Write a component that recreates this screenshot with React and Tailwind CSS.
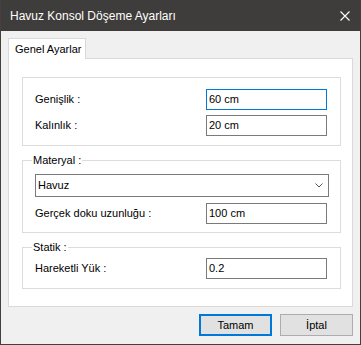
import React from "react";

function TextBox({ value, focused }) {
  return (
    <div
      className={
        "w-[121px] h-[21px] bg-white flex items-center pl-[2px] border " +
        (focused ? "border-[#0078d7]" : "border-[#7a7a7a]")
      }
    >
      <span className="text-[11px] text-black leading-none">{value}</span>
    </div>
  );
}

function Row({ label, value, focused }) {
  return (
    <div className="flex items-center pl-[12px] h-[21px]">
      <span className="w-[171px] text-[11px] text-black leading-none">{label}</span>
      <TextBox value={value} focused={focused} />
    </div>
  );
}

function Group({ title, className, children }) {
  return (
    <div className={"relative border border-[#dcdcdc] " + className}>
      {title && (
        <span className="absolute left-[9px] top-[-8px] bg-white px-[1px] text-[11px] leading-[14px] text-black">
          {title}
        </span>
      )}
      {children}
    </div>
  );
}

export default function App() {
  return (
    <div
      className="w-[361px] h-[345px] bg-[#f0f0f0] flex flex-col border-x border-b border-[#434140]"
      style={{ fontFamily: '"Liberation Sans", Arial, sans-serif' }}
    >
      <div className="h-[31px] bg-[#3f3d3b] flex items-center justify-between pl-[9px] pr-[9px] shrink-0">
        <span className="text-white text-[12px] leading-none">
          Havuz Konsol Döşeme Ayarları
        </span>
        <svg width="10" height="10" viewBox="0 0 10 10" className="mr-[1px]">
          <path d="M0.5 0.5 L9.5 9.5 M9.5 0.5 L0.5 9.5" stroke="#ffffff" strokeWidth="1.1" fill="none" />
        </svg>
      </div>

      <div className="px-[7px] pt-[7px] flex flex-col">
        <div className="relative z-10 w-[78px] h-[21px] bg-white border-x border-t border-[#d9d9d9] flex items-center pl-[6px] -mb-px">
          <span className="text-[11px] leading-none text-black">Genel Ayarlar</span>
        </div>
        <div className="w-[345px] h-[249px] bg-white border border-[#d9d9d9] pl-[13px] pt-[18px] flex flex-col">
          <Group className="w-[319px] h-[69px] pt-[11px] flex flex-col gap-[5px]">
            <Row label="Genişlik :" value="60 cm" focused />
            <Row label="Kalınlık :" value="20 cm" />
          </Group>

          <Group title="Materyal :" className="w-[319px] h-[73px] mt-[14px] pt-[13px] flex flex-col gap-[6px]">
            <div className="ml-[12px] w-[294px] h-[23px] border border-[#7a7a7a] bg-white flex items-center justify-between pl-[2px] pr-[5px]">
              <span className="text-[11px] leading-none text-black">Havuz</span>
              <svg width="8" height="5" viewBox="0 0 8 5">
                <path d="M0.5 0.5 L4 4 L7.5 0.5" stroke="#555" strokeWidth="1" fill="none" />
              </svg>
            </div>
            <Row label="Gerçek doku uzunluğu :" value="100 cm" />
          </Group>

          <Group title="Statik :" className="w-[319px] h-[42px] mt-[14px] pt-[10px] flex flex-col">
            <Row label="Hareketli Yük :" value="0.2" />
          </Group>
        </div>

        <div className="flex justify-end gap-[8px] mt-[7px] w-[345px]">
          <button className="w-[73px] h-[22px] bg-[#e1e1e1] border-2 border-[#0078d7] text-[11px] text-black leading-none flex items-center justify-center">
            Tamam
          </button>
          <button className="w-[73px] h-[22px] bg-[#e1e1e1] border border-[#adadad] text-[11px] text-black leading-none flex items-center justify-center">
            İptal
          </button>
        </div>
      </div>
    </div>
  );
}
